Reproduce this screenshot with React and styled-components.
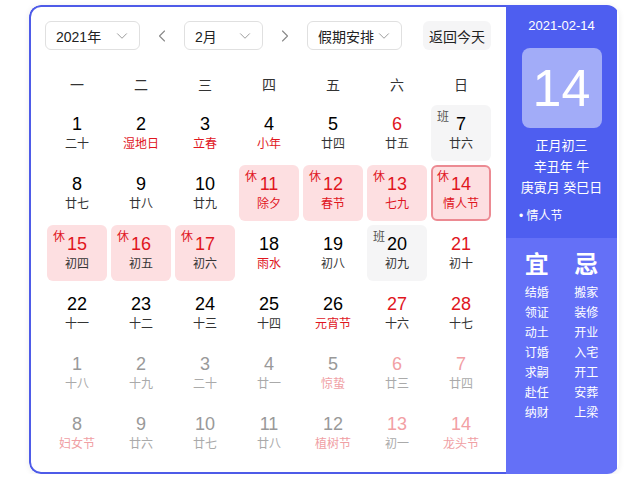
import styled, { createGlobalStyle } from "styled-components";
import { ChevronDown, ChevronLeft, ChevronRight } from "lucide-react";

const GlobalStyle = createGlobalStyle`
  body {
    margin: 0;
    background: #fff;
    font-family: "Liberation Sans", Arial, "Noto Sans CJK SC", sans-serif;
  }
`;

const WEEK = ["一", "二", "三", "四", "五", "六", "日"];

// tone: normal | red (number red), lunarRed, dim (other month)
const DAYS = [
  { d: 1, l: "二十" },
  { d: 2, l: "湿地日", lr: true },
  { d: 3, l: "立春", lr: true },
  { d: 4, l: "小年", lr: true },
  { d: 5, l: "廿四" },
  { d: 6, l: "廿五", nr: true },
  { d: 7, l: "廿六", tag: "班" },

  { d: 8, l: "廿七" },
  { d: 9, l: "廿八" },
  { d: 10, l: "廿九" },
  { d: 11, l: "除夕", tag: "休", nr: true, lr: true },
  { d: 12, l: "春节", tag: "休", nr: true, lr: true },
  { d: 13, l: "七九", tag: "休", nr: true, lr: true },
  { d: 14, l: "情人节", tag: "休", nr: true, lr: true, active: true },

  { d: 15, l: "初四", tag: "休", nr: true },
  { d: 16, l: "初五", tag: "休", nr: true },
  { d: 17, l: "初六", tag: "休", nr: true },
  { d: 18, l: "雨水", lr: true },
  { d: 19, l: "初八" },
  { d: 20, l: "初九", tag: "班" },
  { d: 21, l: "初十", nr: true },

  { d: 22, l: "十一" },
  { d: 23, l: "十二" },
  { d: 24, l: "十三" },
  { d: 25, l: "十四" },
  { d: 26, l: "元宵节", lr: true },
  { d: 27, l: "十六", nr: true },
  { d: 28, l: "十七", nr: true },

  { d: 1, l: "十八", dim: true },
  { d: 2, l: "十九", dim: true },
  { d: 3, l: "二十", dim: true },
  { d: 4, l: "廿一", dim: true },
  { d: 5, l: "惊蛰", lr: true, dim: true },
  { d: 6, l: "廿三", nr: true, dim: true },
  { d: 7, l: "廿四", nr: true, dim: true },

  { d: 8, l: "妇女节", lr: true, dim: true },
  { d: 9, l: "廿六", dim: true },
  { d: 10, l: "廿七", dim: true },
  { d: 11, l: "廿八", dim: true },
  { d: 12, l: "植树节", lr: true, dim: true },
  { d: 13, l: "初一", nr: true, dim: true },
  { d: 14, l: "龙头节", nr: true, lr: true, dim: true },
];

const YI = ["结婚", "领证", "动土", "订婚", "求嗣", "赴任", "纳财"];
const JI = ["搬家", "装修", "开业", "入宅", "开工", "安葬", "上梁"];

const App = () => {
  return (
    <>
      <GlobalStyle />
      <Page>
        <Calendar>
          <Main>
            <Toolbar>
              <Select $w={95}>
                <span>2021年</span>
                <ChevronDown size={18} strokeWidth={1.3} color="#999" />
              </Select>
              <ArrowBtn>
                <ChevronLeft size={20} strokeWidth={1.3} color="#888" />
              </ArrowBtn>
              <Select $w={79}>
                <span>2月</span>
                <ChevronDown size={18} strokeWidth={1.3} color="#999" />
              </Select>
              <ArrowBtn>
                <ChevronRight size={20} strokeWidth={1.3} color="#888" />
              </ArrowBtn>
              <Select $w={95}>
                <span>假期安排</span>
                <ChevronDown size={18} strokeWidth={1.3} color="#999" />
              </Select>
              <TodayBtn>返回今天</TodayBtn>
            </Toolbar>

            <WeekRow>
              {WEEK.map((w) => (
                <WeekLabel key={w}>{w}</WeekLabel>
              ))}
            </WeekRow>

            <Grid>
              {DAYS.map((day, i) => (
                <Cell
                  key={i}
                  $kind={day.tag === "休" ? "rest" : day.tag === "班" ? "work" : "none"}
                  $active={day.active}
                >
                  {day.tag && <Tag $rest={day.tag === "休"}>{day.tag}</Tag>}
                  <Num $red={day.nr} $dim={day.dim}>{day.d}</Num>
                  <Lunar $red={day.lr} $dim={day.dim}>{day.l}</Lunar>
                </Cell>
              ))}
            </Grid>
          </Main>

          <Side>
            <SideTop>
              <DateText>2021-02-14</DateText>
              <BigDay>14</BigDay>
              <LunarInfo>
                <div>正月初三</div>
                <div>辛丑年 牛</div>
                <div>庚寅月 癸巳日</div>
              </LunarInfo>
              <Festival>• 情人节</Festival>
            </SideTop>
            <SideBottom>
              <YiJiCol>
                <YiJiTitle>宜</YiJiTitle>
                {YI.map((t) => (
                  <YiJiItem key={t}>{t}</YiJiItem>
                ))}
              </YiJiCol>
              <YiJiCol>
                <YiJiTitle>忌</YiJiTitle>
                {JI.map((t) => (
                  <YiJiItem key={t}>{t}</YiJiItem>
                ))}
              </YiJiCol>
            </SideBottom>
          </Side>
        </Calendar>
      </Page>
    </>
  );
};

const Page = styled.div`
  padding: 5px 0 0 29px;
`;

const Calendar = styled.div`
  display: flex;
  width: 590px;
  height: 469px;
  border-radius: 12px;
  overflow: hidden;
  box-shadow: 0 1px 6px rgba(0, 0, 0, 0.08);
`;

const Main = styled.div`
  width: 477px;
  box-sizing: border-box;
  border: 2px solid #4e5be8;
  border-right: none;
  border-radius: 12px 0 0 12px;
  padding: 14px 0 0 14px;
  background: #fff;
`;

const Toolbar = styled.div`
  display: flex;
  align-items: center;
  height: 29px;
`;

const Select = styled.div`
  width: ${(p) => p.$w}px;
  height: 29px;
  box-sizing: border-box;
  border: 1px solid #e0e0e0;
  border-radius: 6px;
  display: flex;
  align-items: center;
  justify-content: space-between;
  padding: 0 8px 0 10px;
  font-size: 14px;
  color: #222;
`;

const ArrowBtn = styled.div`
  width: 44px;
  display: flex;
  justify-content: center;
  align-items: center;
`;

const TodayBtn = styled.div`
  margin-left: 21px;
  width: 68px;
  height: 29px;
  border-radius: 6px;
  background: #f5f5f6;
  display: flex;
  align-items: center;
  justify-content: center;
  font-size: 14px;
  color: #222;
`;

const WeekRow = styled.div`
  display: grid;
  grid-template-columns: repeat(7, 60px);
  column-gap: 4px;
  margin: 20px 0 0 2px;
  height: 28px;
  align-items: center;
`;

const WeekLabel = styled.div`
  text-align: center;
  font-size: 14px;
  color: #333;
`;

const Grid = styled.div`
  display: grid;
  grid-template-columns: repeat(7, 60px);
  grid-auto-rows: 56px;
  gap: 4px;
  margin: 7px 0 0 2px;
`;

const Cell = styled.div`
  position: relative;
  box-sizing: border-box;
  border-radius: 6px;
  padding-top: 8px;
  display: flex;
  flex-direction: column;
  align-items: center;
  background: ${(p) =>
    p.$kind === "rest" ? "#fddfe1" : p.$kind === "work" ? "#f5f5f6" : "transparent"};
  border: 2px solid ${(p) => (p.$active ? "#ec8a92" : "transparent")};
  padding-top: 6px;
`;

const Tag = styled.span`
  position: absolute;
  left: 4px;
  top: 0px;
  font-size: 12px;
  color: ${(p) => (p.$rest ? "#e0161e" : "#555")};
`;

const Num = styled.div`
  font-size: 18px;
  line-height: 22px;
  color: ${(p) =>
    p.$dim ? (p.$red ? "#f2a0a4" : "#999") : p.$red ? "#e0161e" : "#000"};
`;

const Lunar = styled.div`
  font-size: 12px;
  line-height: 16px;
  margin-top: 1px;
  color: ${(p) =>
    p.$dim ? (p.$red ? "#f0a0a4" : "#aaa") : p.$red ? "#e0161e" : "#333"};
`;

const Side = styled.div`
  width: 111px;
  display: flex;
  flex-direction: column;
  color: #fff;
`;

const SideTop = styled.div`
  background: #4e5ef0;
  height: 233px;
  display: flex;
  flex-direction: column;
  align-items: center;
  padding-top: 13px;
  box-sizing: border-box;
`;

const DateText = styled.div`
  font-size: 13px;
  line-height: 16px;
`;

const BigDay = styled.div`
  margin-top: 14px;
  width: 80px;
  height: 80px;
  border-radius: 8px;
  background: #a2acf8;
  display: flex;
  align-items: center;
  justify-content: center;
  font-size: 52px;
  color: #fff;
`;

const LunarInfo = styled.div`
  margin-top: 7px;
  text-align: center;
  font-size: 13px;
  line-height: 21px;
`;

const Festival = styled.div`
  align-self: flex-start;
  margin: 10px 0 0 13px;
  font-size: 12px;
  line-height: 16px;
`;

const SideBottom = styled.div`
  flex: 1;
  background: #6470f7;
  display: flex;
  justify-content: space-around;
  padding: 12px 6px 0;
`;

const YiJiCol = styled.div`
  display: flex;
  flex-direction: column;
  align-items: center;
`;

const YiJiTitle = styled.div`
  font-size: 24px;
  font-weight: bold;
  line-height: 30px;
  margin-bottom: 3px;
`;

const YiJiItem = styled.div`
  font-size: 12px;
  line-height: 20px;
`;

export default App;
